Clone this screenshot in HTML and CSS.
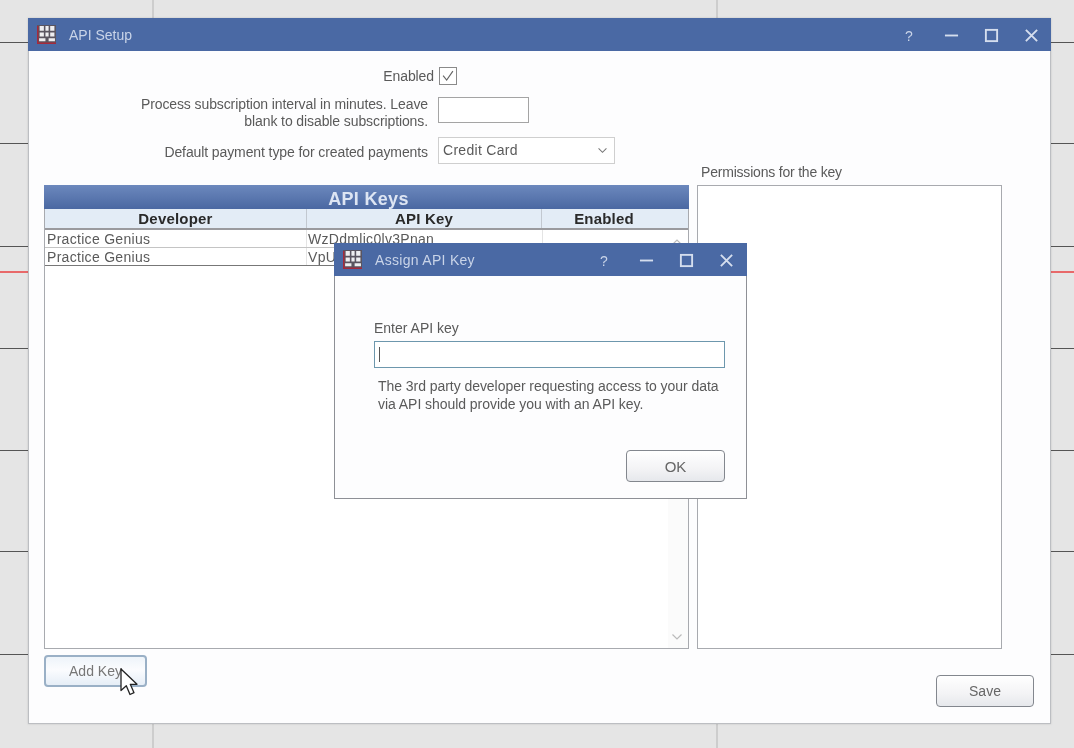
FILE: index.html
```html
<!DOCTYPE html>
<html lang="en">
<head>
<meta charset="utf-8">
<title>API Setup</title>
<link rel="stylesheet" href="styles.css">
</head>
<body>
<div class="desktop">
  <div class="hline l42"></div><div class="hline l143"></div><div class="hline l246"></div><div class="hline red"></div><div class="hline l348"></div><div class="hline l450"></div><div class="hline l551"></div><div class="hline l654"></div>
  <div class="vline v152"></div><div class="vline v716"></div>

  <section class="window main-window">
    <header class="titlebar">
      <svg class="app-icon" viewBox="0 0 18 18"><rect width="18" height="18" fill="#5a5560"/><path d="M0.7 1v16.3H18" fill="none" stroke="#a52a3c" stroke-width="1.4"/><path d="M2.5 1h4v4.5h-4zM8 1h3v4.5H8zM12.500 1h4v4.5h-4zM2.500 7h4v4h-4zM8 7h3v4H8zM12.500 7h4v4h-4zM2 12.500h6v3H2zM11 12.500h6v3h-6z" fill="#eeeef0"/></svg>
      <span class="title">API Setup</span>
      <div class="controls">
        <span class="ctl-help">?</span>
        <svg class="ctl" viewBox="0 0 16 16"><path d="M1 8h14"/></svg>
        <svg class="ctl" viewBox="0 0 16 16"><rect x="2" y="2" width="12" height="12"/></svg>
        <svg class="ctl" viewBox="0 0 16 16"><path d="M2 2l12 12M14 2L2 14"/></svg>
      </div>
    </header>
    <div class="main-body">
      <div class="form">
        <label class="lbl lbl-enabled">Enabled</label>
        <span class="checkbox"><svg viewBox="0 0 18 18"><path d="M3.500 8.500l4 5 7-10"/></svg></span>
        <label class="lbl lbl-interval">Process subscription interval in minutes. Leave<br>blank to disable subscriptions.</label>
        <span class="textbox"></span>
        <label class="lbl">Default payment type for created payments</label>
        <span class="combo"><span>Credit Card</span><svg viewBox="0 0 12 8"><path d="M1.500 1.500L6 6l4.500-4.500"/></svg></span>
      </div>
      <div class="panels">
        <div class="keys">
          <div class="keys-title">API Keys</div>
          <div class="keys-head">
            <span class="col-dev">Developer</span>
            <span class="col-key">API Key</span>
            <span class="col-en">Enabled</span>
          </div>
          <div class="keys-rows">
            <div class="row"><span class="col-dev">Practice Genius</span><span class="col-key">WzDdmlic0lv3Pnan</span><span class="col-en"></span></div>
            <div class="row"><span class="col-dev">Practice Genius</span><span class="col-key">VpUk</span><span class="col-en"></span></div>
            <svg class="scroll-up" viewBox="0 0 12 8"><path d="M1.500 6.500L6 2l4.500 4.500"/></svg>
            <svg class="scroll-down" viewBox="0 0 12 8"><path d="M1.500 1.500L6 6l4.500-4.500"/></svg>
          </div>
        </div>
        <div class="perm">
          <div class="perm-label">Permissions for the key</div>
          <div class="perm-box"></div>
        </div>
      </div>
      <div class="actions">
        <button class="btn btn-add">Add Key</button>
        <button class="btn btn-save">Save</button>
      </div>
    </div>
  </section>

  <section class="window dialog">
    <header class="titlebar small">
      <svg class="app-icon" viewBox="0 0 18 18"><rect width="18" height="18" fill="#5a5560"/><path d="M0.700 1v16.300H18" fill="none" stroke="#a52a3c" stroke-width="1.400"/><path d="M2.500 1h4v4.500h-4zM8 1h3v4.500H8zM12.500 1h4v4.500h-4zM2.500 7h4v4h-4zM8 7h3v4H8zM12.500 7h4v4h-4zM2 12.500h6v3H2zM11 12.500h6v3h-6z" fill="#eeeef0"/></svg>
      <span class="title">Assign API Key</span>
      <div class="controls">
        <span class="ctl-help">?</span>
        <svg class="ctl" viewBox="0 0 16 16"><path d="M1 8h14"/></svg>
        <svg class="ctl" viewBox="0 0 16 16"><rect x="2" y="2" width="12" height="12"/></svg>
        <svg class="ctl" viewBox="0 0 16 16"><path d="M2 2l12 12M14 2L2 14"/></svg>
      </div>
    </header>
    <div class="dialog-body">
      <div class="enter-label">Enter API key</div>
      <div class="key-input"><span class="caret"></span></div>
      <p class="hint">The 3rd party developer requesting access to your data<br>via API should provide you with an API key.</p>
      <div class="dialog-actions"><button class="btn btn-ok">OK</button></div>
    </div>
  </section>

  <svg class="cursor" viewBox="0 0 18 28"><path d="M1 1v21.500l5.300-4.700 3.700 8.700 4-1.800-3.700-8.400H17z" fill="#fff" stroke="#222" stroke-width="1.300" stroke-linejoin="round"/></svg>
</div>
</body>
</html>
```
FILE: styles.css
```css
* { box-sizing: border-box; }
html, body { margin: 0; padding: 0; }
body { width: 1074px; height: 748px; overflow: hidden; font-family: "Liberation Sans", Arial, sans-serif; font-size: 14px; color: #5a5a5a; }
.desktop { position: relative; width: 1074px; height: 748px; background: #e5e5e5; overflow: hidden; filter: blur(0.5px); }

.hline { position: absolute; left: 0; right: 0; height: 1px; background: #555; }
.l42 { top: 42px; } .l143 { top: 143px; } .l246 { top: 246px; } .l348 { top: 348px; } .l450 { top: 450px; } .l551 { top: 551px; } .l654 { top: 654px; }
.red { top: 271px; height: 2px; background: #e8696a; }
.vline { position: absolute; top: 0; bottom: 0; width: 2px; background: #cdcdcd; }
.v152 { left: 152px; } .v716 { left: 716px; }

.window { position: absolute; background: #fdfdfe; display: flex; flex-direction: column; border: 1px solid #bcbec2; border-top: 0; }
.main-window { left: 28px; top: 18px; width: 1023px; height: 706px; box-shadow: 0 0 2px rgba(0,0,0,.15); }
.dialog { left: 334px; top: 243px; width: 413px; height: 256px; border-color: #8e9096; }

.titlebar { flex: none; height: 33px; background: #4a69a4; display: flex; align-items: center; color: #c9d4e8; padding-left: 9px; margin: 0 -1px; }
.app-icon { width: 19px; height: 19px; flex: none; }
.title { margin-left: 13px; font-size: 14px; }
.small .title { letter-spacing: 0.3px; }
.controls { margin-left: auto; display: flex; align-items: center; gap: 25px; padding: 2px 12px 0 0; }
.small .controls { padding-right: 13px; }
.ctl { width: 15px; height: 15px; fill: none; stroke: #d5deee; stroke-width: 2; }
.ctl-help { font-size: 14px; width: 8px; margin-right: 6px; color: #c9d4e8; }

.main-body { flex: 1; display: flex; flex-direction: column; padding: 16px 16px 16px 15px; }
.form { flex: none; display: grid; grid-template-columns: 384px auto; column-gap: 10px; row-gap: 11px; justify-content: start; align-items: center; line-height: 17px; letter-spacing: -0.1px; height: 118px; align-content: start; }
.lbl { text-align: right; white-space: nowrap; }
.lbl-enabled { margin-right: -6px; }
.checkbox { width: 18px; height: 18px; margin-left: 1px; border: 1px solid #8a8a8a; background: #fff; }
.checkbox svg { display: block; width: 16px; height: 16px; fill: none; stroke: #666; stroke-width: 1.3; }
.textbox { width: 91px; height: 26px; margin-bottom: 6px; border: 1px solid #a4a4a4; background: #fff; }
.combo { width: 177px; height: 27px; margin-top: -4px; border: 1px solid #cfcfcf; background: #fff; display: flex; align-items: center; justify-content: space-between; padding: 0 6px 0 4px; letter-spacing: 0.3px; }
.combo svg { width: 11px; height: 7px; fill: none; stroke: #777; stroke-width: 1.2; }

.panels { flex: none; display: flex; gap: 8px; height: 464px; align-items: stretch; }
.keys { width: 645px; display: flex; flex-direction: column; border: 1px solid #a8aaaf; border-top: 0; background: #fff; }
.keys-title { flex: none; height: 24px; margin: 0 -1px; padding-left: 4px; background: linear-gradient(#6c88bd, #4a68a2); color: #dde5f3; font-weight: bold; font-size: 18px; letter-spacing: 0.3px; line-height: 28px; text-align: center; }
.keys-head { flex: none; height: 21px; display: flex; background: #e3ecf6; color: #2a2a2a; font-weight: bold; font-size: 15px; letter-spacing: 0.2px; line-height: 20px; text-align: center; border-bottom: 2px solid #9a9a9e; }
.col-dev { width: 261px; flex: none; }
.col-key { width: 236px; flex: none; }
.col-en { flex: 1; }
.keys-head .col-en { padding-right: 22px; }
.keys-head .col-key { border-left: 1px solid #c2c8d0; border-right: 1px solid #c2c8d0; }
.keys-rows { flex: 1; position: relative; background: linear-gradient(to left, #fbfbfb 20px, #fff 20px); }
.row { height: 18px; display: flex; line-height: 18px; border-bottom: 1px solid #c4c4c4; letter-spacing: 0.3px; padding-left: 2px; white-space: nowrap; overflow: hidden; background: #fff; }
.row .col-dev { width: 259px; }
.row .col-key { border-left: 1px solid #e4e4e4; padding-left: 1px; }
.row .col-en { border-left: 1px solid #e4e4e4; }
.row:nth-child(2) { border-bottom-color: #777; }
.scroll-up, .scroll-down { position: absolute; right: 5px; width: 12px; height: 8px; fill: none; stroke: #bbb; stroke-width: 1.2; }
.scroll-up { top: 8px; }
.scroll-down { bottom: 7px; }

.perm { position: relative; width: 305px; }
.perm-label { position: absolute; left: 4px; top: -21px; white-space: nowrap; letter-spacing: -0.2px; line-height: 17px; }
.perm-box { height: 100%; border: 1px solid #a8aaaf; background: #fff; }

.actions { flex: 1; display: flex; justify-content: space-between; padding-top: 6px; }
.btn { font-family: inherit; font-size: 14px; color: #666; letter-spacing: 0; border: 1px solid #83878e; border-radius: 4px; background: linear-gradient(#fff, #f3f3f5 60%, #e6e8ec); padding: 0; }
.btn-add { width: 103px; height: 32px; color: #777; border-color: #9ab0c6; border-width: 2px; background: linear-gradient(#eef4fa, #fbfcfe 45%, #e6eef7); }
.btn-save { width: 98px; height: 32px; align-self: flex-end; }

.dialog-body { flex: 1; display: flex; flex-direction: column; padding: 44px 21px 16px 39px; }
.enter-label { line-height: 17px; }
.key-input { margin-top: 4px; height: 27px; width: 351px; border: 1px solid #6d97ad; background: #fff; display: flex; align-items: center; padding-left: 4px; }
.caret { width: 1px; height: 15px; background: #555; }
.hint { margin: 9px 0 0 4px; line-height: 18px; letter-spacing: -0.05px; white-space: nowrap; }
.dialog-actions { flex: 1; display: flex; justify-content: flex-end; align-items: flex-end; }
.btn-ok { width: 99px; height: 32px; font-size: 15px; }

.cursor { position: absolute; left: 120px; top: 668px; width: 18px; height: 28px; }
```
